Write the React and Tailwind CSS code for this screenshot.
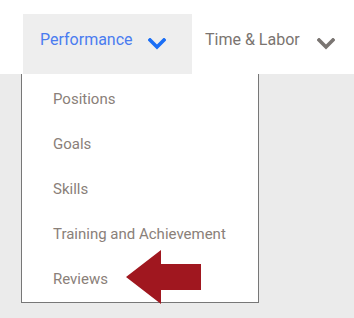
const font = { fontFamily: "Roboto, 'Liberation Sans', sans-serif" };

function Chevron({ color }) {
  return (
    <svg width="18" height="12" viewBox="0 0 18 12" className="block">
      <polyline points="2,2 9,9 16,2" fill="none" stroke={color} strokeWidth="3.6" strokeLinecap="square" />
    </svg>
  );
}

const items = ["Positions", "Goals", "Skills", "Training and Achievement", "Reviews"];

export default function App() {
  return (
    <div className="w-[354px] h-[318px] bg-[#ebebeb] overflow-hidden" style={font}>
      <div className="h-[74px] bg-white flex items-end">
        <div className="ml-[23px] w-[169px] h-[60px] bg-[#eeeeee] flex items-center pl-[17px] pb-[8px]">
          <span className="text-[16px] text-[#4a7cf0] leading-none">Performance</span>
          <span className="ml-[15px] mt-[7px]"><Chevron color="#1a6ef5" /></span>
        </div>
        <div className="h-[60px] flex items-center pl-[13px] pb-[8px]">
          <span className="text-[16px] text-[#7a7470] leading-none">Time &amp; Labor</span>
          <span className="ml-[17px] mt-[7px]"><Chevron color="#7a7572" /></span>
        </div>
      </div>
      <div className="relative ml-[21px] w-[238px] h-[229px] bg-white border border-t-0 border-[#777777]">
        <ul className="pt-[3px]">
          {items.map((t) => (
            <li key={t} className="h-[45px] flex items-center pl-[31px] text-[15px] text-[#8a8079]">
              {t}
            </li>
          ))}
        </ul>
        <svg className="absolute left-[104px] top-[176px]" width="76" height="54" viewBox="0 0 76 54">
          <polygon points="0,27 35,0 35,14 75,14 75,40 35,40 35,54" fill="#a0171f" />
        </svg>
      </div>
    </div>
  );
}
